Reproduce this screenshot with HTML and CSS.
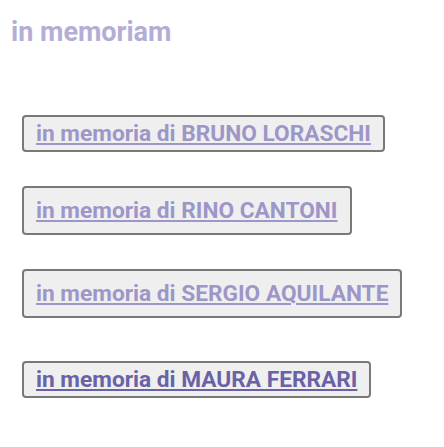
FILE: index.html
```html
<!doctype html>
<html lang="it">
<head>
	<meta charset="UTF-8">
	<title>in memoriam</title>
	<link rel="stylesheet" href="styles.css">
</head>
<body>
	<h1 class="title">in memoriam</h1>
	<ul class="list">
		<li class="item item-short"><a class="link" href="#">in memoria di BRUNO LORASCHI</a></li>
		<li class="item item-tall"><a class="link" href="#">in memoria di RINO CANTONI</a></li>
		<li class="item item-tall"><a class="link" href="#">in memoria di SERGIO AQUILANTE</a></li>
		<li class="item item-short item-last"><a class="link link-visited" href="#">in memoria di MAURA FERRARI</a></li>
	</ul>
</body>
</html>
```

FILE: styles.css
```css
*{
	margin: 0;
	padding: 0;
	list-style: none;
}
body{
	font-family: Roboto, "Liberation Sans", sans-serif;
	background: #fff;
	padding: 14px 11px;
}
.title{
	font-size: 27px;
	font-weight: 700;
	color: #b3aed5;
	line-height: 36px;
}
.list{
	padding: 65px 0 0 11px;
	display: flex;
	flex-direction: column;
	align-items: flex-start;
}
.item{
	border: 2px solid #797979;
	border-radius: 4px;
	background: #efefef;
	padding: 0 12px;
	margin-bottom: 34px;
}
.item-short{
	padding-top: 5px;
	padding-bottom: 4px;
}
.item-tall{
	padding-top: 11px;
	padding-bottom: 10px;
}
.item-last{
	margin-top: 9px;
}
.link{
	font-size: 22.7px;
	font-weight: 700;
	line-height: 24px;
	color: #9d96c8;
	text-decoration: underline;
}
.link-visited{
	color: #6a62a6;
}
```
